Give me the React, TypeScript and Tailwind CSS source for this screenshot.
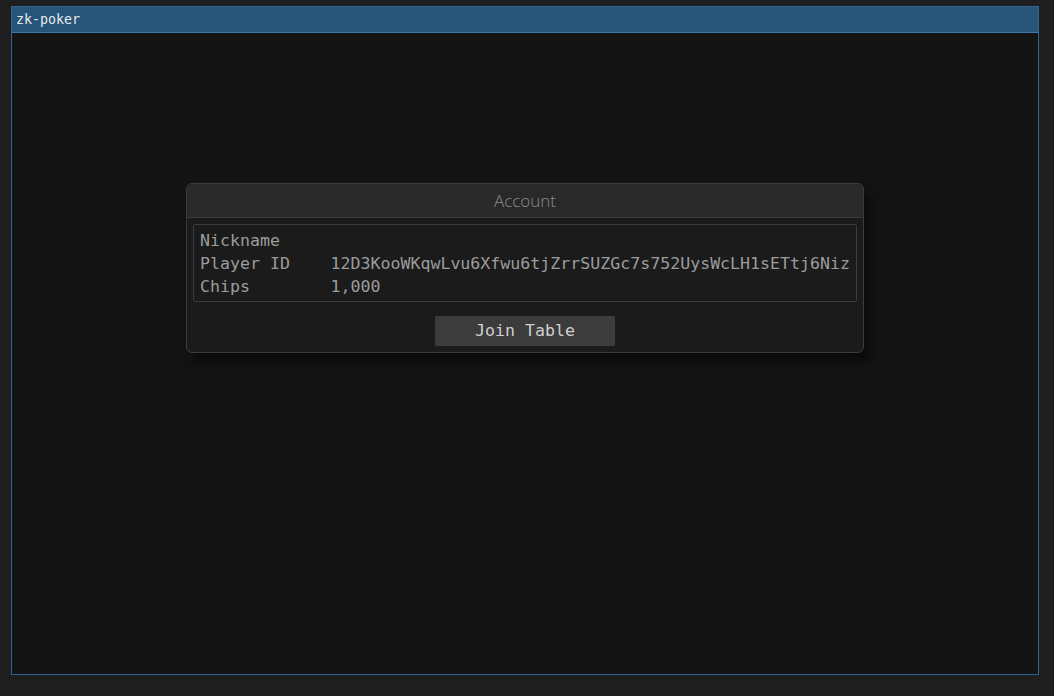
import React from 'react';

const rows = [
  { label: 'Nickname', value: '' },
  { label: 'Player ID', value: '12D3KooWKqwLvu6Xfwu6tjZrrSUZGc7s752UysWcLH1sETtj6Niz' },
  { label: 'Chips', value: '1,000' },
];

const mono = { fontFamily: '"DejaVu Sans Mono", "Liberation Mono", monospace' };

export default function App() {
  return (
    <div className="w-[1054px] h-[696px] bg-[#1e1e1e] pt-[6px] pl-[11px] overflow-hidden">
      <div className="w-[1028px] h-[669px] border border-[#2d6394] bg-[#141414] flex flex-col">
        <div
          className="h-[26px] bg-[#27557a] border-b border-[#3b78a9] pl-[4px] flex items-center text-[13.3px] text-[#e8e8e8]"
          style={mono}
        >
          zk-poker
        </div>
        <div className="flex-1 pt-[150px] pl-[174px]">
          <div className="w-[678px] rounded-[6px] border border-[#3c3c3c] bg-[#1b1b1b] shadow-[6px_10px_14px_rgba(0,0,0,0.55)] overflow-hidden">
            <div
              className="h-[34px] bg-[#292929] border-b border-[#3c3c3c] flex items-center justify-center text-[17px] font-light text-[#8c8c8c]"
              style={{ fontFamily: '"Open Sans", "Noto Sans", sans-serif' }}
            >
              Account
            </div>
            <div className="px-[6px] pt-[6px] pb-[6px] flex flex-col items-center">
              <div
                className="w-full border border-[#3c3c3c] rounded-[2px] px-[6px] pt-[4px] pb-[3px] text-[16.6px] leading-[23px] text-[#9c9c9c]"
                style={mono}
              >
                {rows.map((r) => (
                  <div key={r.label} className="grid grid-cols-[130.5px_1fr] h-[23px] whitespace-nowrap">
                    <span>{r.label}</span>
                    <span>{r.value}</span>
                  </div>
                ))}
              </div>
              <button
                className="mt-[14px] w-[180px] h-[30px] bg-[#3c3c3c] rounded-[2px] text-[16.6px] text-[#cfcfcf]"
                style={mono}
              >
                Join Table
              </button>
            </div>
          </div>
        </div>
      </div>
    </div>
  );
}
